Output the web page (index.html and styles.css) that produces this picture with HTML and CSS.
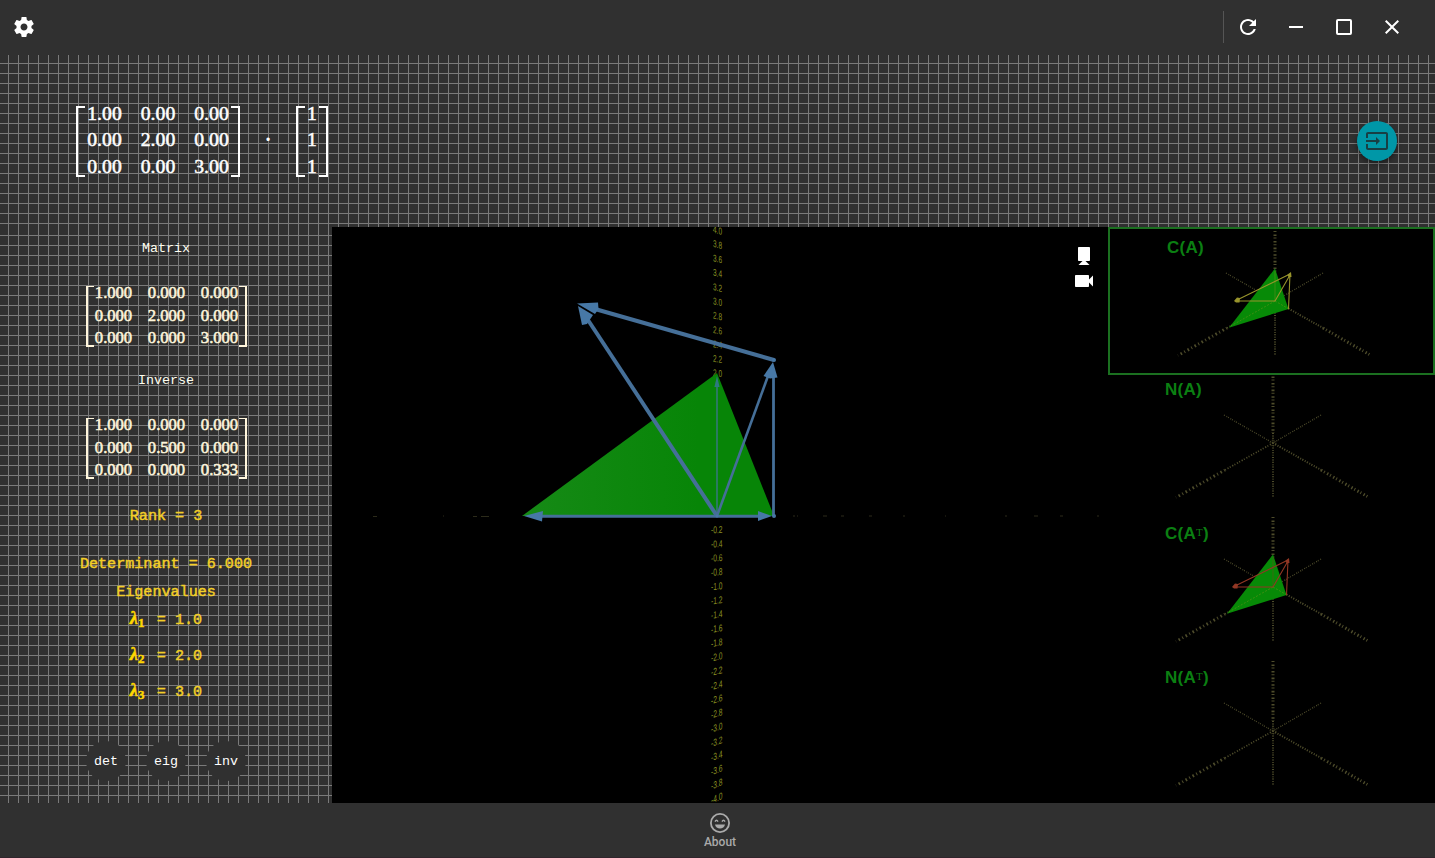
FILE: index.html
```html
<!DOCTYPE html>
<html lang="en">
<head>
<meta charset="utf-8">
<title>Linear algebra</title>
<link rel="stylesheet" href="styles.css">
</head>
<body>
<svg class="defs" width="0" height="0" aria-hidden="true">
  <defs>
    <g id="axes" fill="none" stroke="#4e4c2b">
      <path d="M0-70V-10" stroke-width="3" stroke-dasharray="1 2.4 1.6 1.6"/>
      <path d="M0-10V54" stroke-width="2" stroke-dasharray="1 1.6 .8 1.4"/>
      <path d="M-49-28L0 0" stroke-width="1.3" stroke-dasharray="1 1.8 .8 1"/>
      <path d="M48-28L0 0" stroke-width="1.3" stroke-dasharray="1 1.8 .8 1"/>
      <path d="M0 0L-48 27" stroke-width="1.7" stroke-dasharray="1 1.4 1.2 1.8"/>
      <path d="M0 0L48 27" stroke-width="2" stroke-dasharray="1 1.4 1.2 1.6"/>
      <path d="M-48 27L-97 54.5" stroke-width="3" stroke-dasharray="1 2.6 1.6 2.8"/>
      <path d="M48 27L96 54.5" stroke-width="3" stroke-dasharray="1.4 2 1 2.6"/>
      <circle r="3" stroke-width=".8" stroke-dasharray="1 .8"/>
    </g>
    <g id="vectors" fill="none" stroke="currentColor">
      <path d="M-38 0H0M0 0L15-26M15-27L-38-1M13.5 8L15-27" stroke-width="1.1"/>
      <path d="M0 0V-30" stroke-width=".8" opacity=".45"/>
      <path d="M-41 0L-38-3.4L-35-3L-35.5 1.5L-39 1.5ZM16-29L12.5-26.5L13.5-24L16.5-24Z" fill="currentColor" stroke="none"/>
    </g>
    <g id="space">
      <use href="#axes"/>
      <path d="M0-32.5L13.5 8L-46 26.7Z" fill="#078a07"/>
      <path d="M0 0L-46 26M0 0L14 8" stroke="#3e8f12" stroke-width="1" stroke-dasharray="2 1.5"/>
      <use href="#vectors"/>
    </g>
  </defs>
</svg>

<header class="bar">
  <svg class="icon" viewBox="0 0 24 24"><path d="M19.43 12.98c.04-.32.07-.64.07-.98s-.03-.66-.07-.98l2.11-1.65c.19-.15.24-.42.12-.64l-2-3.46c-.12-.22-.39-.3-.61-.22l-2.49 1c-.52-.4-1.08-.73-1.69-.98l-.38-2.65C14.46 2.18 14.25 2 14 2h-4c-.25 0-.46.18-.49.42l-.38 2.65c-.61.25-1.17.59-1.69.98l-2.49-1c-.23-.09-.49 0-.61.22l-2 3.46c-.13.22-.07.49.12.64l2.11 1.65c-.04.32-.07.65-.07.98s.03.66.07.98l-2.11 1.65c-.19.15-.24.42-.12.64l2 3.46c.12.22.39.3.61.22l2.49-1c.52.4 1.08.73 1.69.98l.38 2.65c.03.24.24.42.49.42h4c.25 0 .46-.18.49-.42l.38-2.65c.61-.25 1.17-.59 1.69-.98l2.49 1c.23.09.49 0 .61-.22l2-3.46c.12-.22.07-.49-.12-.64l-2.11-1.65zM12 15.5c-1.93 0-3.5-1.57-3.5-3.5s1.57-3.5 3.5-3.5 3.5 1.57 3.5 3.5-1.57 3.5-3.5 3.5z"/></svg>
  <div class="window-actions">
    <svg class="icon" viewBox="0 0 24 24"><path d="M17.65 6.35C16.2 4.9 14.21 4 12 4c-4.42 0-7.99 3.58-7.99 8s3.57 8 7.99 8c3.73 0 6.84-2.55 7.73-6h-2.08c-.82 2.33-3.04 4-5.65 4-3.31 0-6-2.69-6-6s2.69-6 6-6c1.66 0 3.14.69 4.22 1.78L13 11h7V4l-2.35 2.35z"/></svg>
    <svg class="icon" viewBox="0 0 24 24"><path d="M19 13H5v-2h14v2z"/></svg>
    <svg class="icon" viewBox="0 0 24 24"><rect x="5" y="5" width="14" height="14" rx="1" fill="none" stroke="#fff" stroke-width="2"/></svg>
    <svg class="icon" viewBox="0 0 24 24"><path d="M19 6.41L17.59 5 12 10.59 6.41 5 5 6.41 10.59 12 5 17.59 6.41 19 12 13.41 17.59 19 19 17.59 13.41 12z"/></svg>
  </div>
</header>

<section class="expression grid-paper">
  <div class="product">
    <div class="matrix large">
      <span>1.00</span><span>0.00</span><span>0.00</span>
      <span>0.00</span><span>2.00</span><span>0.00</span>
      <span>0.00</span><span>0.00</span><span>3.00</span>
    </div>
    <span class="times">·</span>
    <div class="matrix large vector"><span>1</span><span>1</span><span>1</span></div>
  </div>
  <button class="fab" aria-label="Input"><svg class="icon" viewBox="0 0 24 24"><path d="M21 3.01H3c-1.1 0-2 .9-2 2V9h2V4.99h18v14.03H3V15H1v4.01c0 1.1.9 1.98 2 1.98h18c1.1 0 2-.88 2-1.98v-14c0-1.11-.9-2-2-2zM11 16l4-4-4-4v3H1v2h10v3z"/></svg></button>
</section>

<main class="workspace">
  <aside class="sidebar grid-paper">
    <div class="caption">Matrix</div>
    <div class="matrix">
      <span>1.000</span><span>0.000</span><span>0.000</span>
      <span>0.000</span><span>2.000</span><span>0.000</span>
      <span>0.000</span><span>0.000</span><span>3.000</span>
    </div>
    <div class="caption second">Inverse</div>
    <div class="matrix">
      <span>1.000</span><span>0.000</span><span>0.000</span>
      <span>0.000</span><span>0.500</span><span>0.000</span>
      <span>0.000</span><span>0.000</span><span>0.333</span>
    </div>
    <div class="fact rank">Rank = 3</div>
    <div class="fact determinant">Determinant = 6.000</div>
    <div class="fact">Eigenvalues</div>
    <div class="eigenvalues">
      <div class="fact"><span class="lambda">λ<sub>1</sub></span> = 1.0</div>
      <div class="fact"><span class="lambda">λ<sub>2</sub></span> = 2.0</div>
      <div class="fact"><span class="lambda">λ<sub>3</sub></span> = 3.0</div>
    </div>
    <div class="operations"><button>det</button><button>eig</button><button>inv</button></div>
  </aside>

  <section class="stage">
    <svg class="scene" width="776" height="576" viewBox="332 227 776 576">
      <defs><linearGradient id="face"><stop offset="0" stop-color="#168a16"/><stop offset=".7" stop-color="#078507"/><stop offset="1" stop-color="#078507"/></linearGradient></defs>
      <path d="M373 516.5h4M443 516h1M473 516.5h4M481 516.5h8M793 516h2M797 516h1M823 516h4M841 516h3M869 516h3M903 516h2M945 516h1M1005 516h2M1034 516h4M1060 516h3M1097 516h2" stroke="#2c2b1a" fill="none"/>
      <g id="ticks" class="ticks"></g>
      <path d="M717 373L774 516H522Z" fill="url(#face)"/>
      <g stroke="#456f98" fill="none">
        <path d="M717 516V384" stroke-width="1.7" stroke="#317a70"/>
        <path d="M717 516L768 376" stroke-width="2.6"/>
        <path d="M773.5 516V376" stroke-width="2.8"/>
        <path d="M717 516L588 320" stroke-width="4"/>
        <path d="M774 360L595 309" stroke-width="4"/>
        <path d="M540 516.3H760" stroke-width="3"/>
      </g>
      <g fill="#4778a6">
        <path d="M577 303.5L598 302.5L598.5 309L595 314Z"/>
        <path d="M578 306L582 325L587 324L593 315Z"/>
        <path d="M773 362L763.5 376L770 378.5L777.5 377.5Z"/>
        <path d="M524 516L543 511L542 521.5Z"/>
        <path d="M772 516L758 511V521Z"/>
        <path d="M717 376L714.4 387H719.6Z" fill="#2e7980"/>
        <circle cx="774" cy="360" r="2"/><circle cx="774" cy="516" r="2"/><circle cx="717" cy="516" r="1.6"/>
      </g>
    </svg>
    <div class="cameras">
      <svg class="icon upright" viewBox="0 0 24 24"><path d="M17 10.5V7c0-.55-.45-1-1-1H4c-.55 0-1 .45-1 1v10c0 .55.45 1 1 1h12c.55 0 1-.45 1-1v-3.5l4 4v-11l-4 4z"/></svg>
      <svg class="icon" viewBox="0 0 24 24"><path d="M17 10.5V7c0-.55-.45-1-1-1H4c-.55 0-1 .45-1 1v10c0 .55.45 1 1 1h12c.55 0 1-.45 1-1v-3.5l4 4v-11l-4 4z"/></svg>
    </div>
  </section>

  <nav class="spaces">
    <div class="space selected yellow"><h2>C(A)</h2><svg width="325" height="144" viewBox="-165 -72 325 144"><use href="#space"/></svg></div>
    <div class="space"><h2>N(A)</h2><svg width="325" height="144" viewBox="-165 -72 325 144"><use href="#axes"/></svg></div>
    <div class="space red"><h2>C(A<span>T</span>)</h2><svg width="325" height="144" viewBox="-165 -72 325 144"><use href="#space"/></svg></div>
    <div class="space"><h2>N(A<span>T</span>)</h2><svg width="325" height="144" viewBox="-165 -72 325 144"><use href="#axes"/></svg></div>
  </nav>
</main>

<footer class="footer">
  <svg class="icon" viewBox="0 0 24 24"><g fill="none" stroke="#aaa" stroke-width="1.8"><circle cx="12" cy="12" r="9.1"/><path d="M7 10.6Q8.5 8 10 10.6M14 10.6Q15.5 8 17 10.6" stroke-width="1.5"/></g><path d="M7 13.5h10c-.5 2.5-2.5 4-5 4s-4.5-1.5-5-4z"/></svg>
  <span>About</span>
</footer>
<script src="ticks.js"></script>
</body>
</html>
```

FILE: styles.css
```css
* { box-sizing: border-box; }
body { margin: 0; width: 1435px; height: 858px; overflow: hidden; background: #303030; color: #fff; font-family: "Liberation Sans", Arial, sans-serif; display: flex; flex-direction: column; }
button { border: 0; padding: 0; }
.defs { position: absolute; }
.icon { width: 24px; height: 24px; fill: #fff; display: block; flex: none; }

.bar { height: 55px; flex: none; display: flex; align-items: center; justify-content: space-between; padding: 0 31px 1px 12px; }
.window-actions { height: 32px; display: flex; align-items: center; gap: 24px; padding-left: 12px; border-left: 1px solid #555; }

.grid-paper { background-color: #303030; background-image: linear-gradient(to right, transparent 8px, #7a7a7a 8px, #7a7a7a 9px, transparent 9px), linear-gradient(to bottom, transparent 8px, #7a7a7a 8px, #7a7a7a 9px, transparent 9px); background-size: 10px 10px; }

.expression { height: 172px; flex: none; display: flex; align-items: center; justify-content: space-between; padding: 0 38px 0 76px; }
.product { display: flex; align-items: center; }
.times { width: 56px; padding-bottom: 4px; text-align: center; font: bold 20px/24px "Liberation Serif", serif; }
.fab { width: 40px; height: 40px; border-radius: 50%; background: #0097a7; display: grid; place-items: center; box-shadow: 0 3px 5px rgba(0,0,0,.4); }
.fab .icon { fill: #183f44; }

.matrix { position: relative; width: 161px; height: 61px; padding: 0 7px 2px 8px; display: grid; grid-template-columns: repeat(3, 38px); column-gap: 15px; justify-content: center; grid-auto-rows: 22.3px; align-content: center; align-items: center; justify-items: center; color: #fff6dc; font: 16.6px/22px "Liberation Serif", serif; -webkit-text-stroke: .55px currentColor; }
.matrix::before, .matrix::after { content: ""; position: absolute; top: 0; bottom: 0; width: 6px; border: 2px solid currentColor; border-top-width: 1px; border-bottom-width: 2px; }
.matrix::before { left: 0; border-right: 0; }
.matrix::after { right: 0; border-left: 0; }
.matrix.large { width: 164px; height: 71px; padding: 0 8px 4px; grid-template-columns: repeat(3, 35px); column-gap: 18.5px; grid-auto-rows: 26.5px; font-size: 19.7px; color: #fff; }
.matrix.large::before, .matrix.large::after { width: 7px; border-width: 2px; }
.matrix.large::before { border-right: 0; }
.matrix.large::after { border-left: 0; }
.matrix.large.vector { width: 32px; grid-template-columns: 12px; }

.workspace { height: 576px; flex: none; display: flex; }
.sidebar { width: 332px; display: flex; flex-direction: column; align-items: center; padding-top: 12px; font-family: "Liberation Mono", "Courier New", monospace; }
.caption { height: 20px; margin-bottom: 27px; font-size: 13.33px; line-height: 20px; color: #fffff0; }
.caption.second { margin-top: 24px; }
.fact { height: 20px; font-size: 15.1px; line-height: 20px; color: #f3cf27; white-space: pre; -webkit-text-stroke: .45px currentColor; }
.rank { margin-top: 27px; }
.determinant { margin: 28px 0 8px; }
.eigenvalues { display: flex; flex-direction: column; gap: 16px; padding-top: 6px; }
.lambda { display: inline-block; width: 18px; font: italic bold 18.5px/20px "Liberation Serif", serif; color: #ffd700; }
.lambda sub { font: bold 13px/1 "Liberation Serif", serif; vertical-align: -3px; }
.operations { display: flex; gap: 20px; margin-top: 41px; }
.operations button { width: 40px; height: 40px; border-radius: 50%; background: #303030; color: #fff; font: 13.33px "Liberation Mono", "Courier New", monospace; }

.stage { position: relative; width: 776px; background: #000; }
.scene { display: block; }
.ticks { fill: #8a9222; font: 10px "Liberation Sans", sans-serif; }
.cameras { position: absolute; top: 17px; right: 12px; display: flex; flex-direction: column; gap: 1px; }
.upright { transform: rotate(90deg); }

.spaces { width: 327px; background: #000; }
.space { position: relative; height: 144px; }
.space svg { display: block; }
.space h2 { position: absolute; left: 57px; top: 9px; margin: 0; font-size: 17px; line-height: 20px; letter-spacing: .25px; color: #0b7f12; }
.space h2 span { font: 11px/10px "Liberation Serif", serif; vertical-align: 3px; }
.space.selected { z-index: 1; height: 148px; margin-bottom: -4px; border: 2px solid #1b7020; }
.yellow { color: #98942c; }
.red { color: #923724; }

.footer { height: 55px; flex: none; display: flex; flex-direction: column; align-items: center; padding: 8px 0 0 5px; border-bottom: 1px solid #30252c; color: #aaa; font: 500 12px/14px Roboto, sans-serif; }
.footer .icon { fill: #aaa; }
```

FILE: ticks.js
```js
// Numbers along the vertical axis, tilted with their distance from the origin.
const group = document.getElementById("ticks");
for (let i = -20; i <= 20; i++) {
  if (i >= 0 && i < 10) continue;
  const value = i / 5;
  const y = value > 0 ? 516 - 71.5 * value : 515.4 - 70.6 * value;
  const label = document.createElementNS("http://www.w3.org/2000/svg", "text");
  label.textContent = value.toFixed(1);
  label.setAttribute("x", value < 0 ? -6 : -4);
  label.setAttribute("y", 3.6);
  label.setAttribute("textLength", value < 0 ? 11.5 : 9);
  label.setAttribute("lengthAdjust", "spacingAndGlyphs");
  label.setAttribute("transform", `translate(717 ${y}) skewY(${value > 0 ? value * 4 : value * 6})`);
  group.appendChild(label);
}
```
